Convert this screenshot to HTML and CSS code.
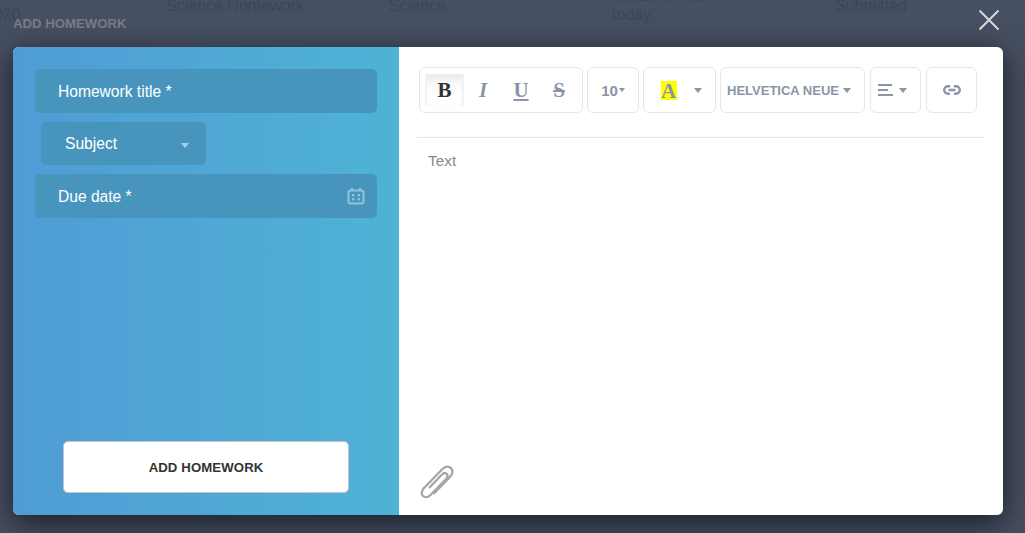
FILE: index.html
```html
<!DOCTYPE html>
<html lang="en">
<head>
    <meta charset="UTF-8">
    <title>Add homework</title>
    <link rel="stylesheet" href="styles.css">
</head>
<body>
    <div class="table-row">
        <span class="cell cell-date">02-<br>2020</span>
        <span class="cell cell-title">Science Homework</span>
        <span class="cell cell-subject">Science</span>
        <span class="cell cell-due">Deadline was<br>today</span>
        <span class="cell cell-status">Submitted</span>
    </div>

    <div class="overlay">
        <div class="overlay-head">
            <span class="overlay-title">ADD HOMEWORK</span>
            <svg class="close-icon" width="22" height="22" viewBox="0 0 22 22">
                <path d="M1.5 1.5 L20.5 20.5 M20.5 1.5 L1.5 20.5" />
            </svg>
        </div>

        <div class="modal">
            <div class="side">
                <div class="field">Homework title *</div>
                <div class="field field-select">
                    Subject
                    <span class="caret caret-light"></span>
                </div>
                <div class="field field-date">
                    Due date *
                    <svg class="date-icon" width="18" height="18" viewBox="0 0 18 18">
                        <rect x="1.5" y="3.5" width="15" height="13" rx="2" />
                        <path d="M5 1 V4 M13 1 V4" />
                        <rect class="dot" x="5" y="7" width="2.4" height="2.4" />
                        <rect class="dot" x="10.6" y="7" width="2.4" height="2.4" />
                        <rect class="dot" x="5" y="11" width="2.4" height="2.4" />
                        <rect class="dot" x="10.6" y="11" width="2.4" height="2.4" />
                    </svg>
                </div>
                <button class="submit">ADD HOMEWORK</button>
            </div>

            <div class="editor">
                <div class="toolbar">
                    <div class="tool-group group-style">
                        <span class="style-btn style-active">B</span>
                        <span class="style-btn style-italic">I</span>
                        <span class="style-btn style-under">U</span>
                        <span class="style-btn style-strike">S</span>
                    </div>
                    <div class="tool-group group-size">10<span class="caret caret-small"></span></div>
                    <div class="tool-group group-color">
                        <span class="color-a">A</span>
                        <span class="caret"></span>
                    </div>
                    <div class="tool-group group-font">HELVETICA NEUE<span class="caret"></span></div>
                    <div class="tool-group group-align">
                        <svg width="15" height="12" viewBox="0 0 15 12">
                            <path d="M0 1 H14 M0 6 H10 M0 11 H15" />
                        </svg>
                        <span class="caret"></span>
                    </div>
                    <div class="tool-group group-link">
                        <svg width="18" height="10" viewBox="0 0 18 10">
                            <path d="M7 1.2 H5 a3.8 3.8 0 0 0 0 7.6 H7 M11 1.2 H13 a3.8 3.8 0 0 1 0 7.6 H11 M5.5 5 H12.5" />
                        </svg>
                    </div>
                </div>
                <div class="text-area">Text</div>
                <svg class="clip-icon" width="36" height="34" viewBox="0 0 36 34">
                    <path d="M13.5 29 L30 12 C33.5 8 33 4.5 30.5 2.8 C28 1 25 1.5 22.5 4 L4 23 C1.5 26 1 28.5 2.8 30.8 C5 33 8 32.5 10.5 30 L26 14 C28 12 28 10 26.8 9 C25.5 7.8 23.5 8 22 9.5 L9 23" />
                </svg>
            </div>
        </div>
    </div>
</body>
</html>
```

FILE: styles.css
```css
* {
    margin: 0;
    padding: 0;
    box-sizing: border-box;
}

html, body {
    height: 100%;
    overflow: hidden;
}

body {
    position: relative;
    font-family: "Liberation Sans", Arial, sans-serif;
    background-color: #475062;
}

/* table behind the overlay */
.table-row {
    display: grid;
    grid-template-columns: 166px 223px 223px 223px 1fr;
    align-items: center;
    margin-top: -14px;
    font-size: 16px;
    line-height: 19px;
    color: #3d4657;
}

.cell-date {
    margin-left: -15px;
}

/* overlay */
.overlay {
    position: absolute;
    inset: 0;
    display: flex;
    flex-direction: column;
    padding: 0 22px 18px 13px;
}

.overlay-head {
    position: relative;
    height: 47px;
    padding-top: 14px;
}

.overlay-title {
    font-size: 13.2px;
    line-height: 15px;
    font-weight: 700;
    color: #777b84;
}

.close-icon {
    position: absolute;
    top: 9px;
    right: 3px;
}

.close-icon path {
    fill: none;
    stroke: #d5d7da;
    stroke-width: 2;
}

.modal {
    flex: 1;
    display: flex;
    border-radius: 6px;
    overflow: hidden;
    background: #fff;
}

.overlay::before {
    content: "";
    position: absolute;
    left: 13px;
    right: 22px;
    top: 47px;
    bottom: 18px;
    border-radius: 6px;
    box-shadow: 0 8px 30px 2px rgba(15, 17, 25, 0.75);
}

.overlay-head, .modal {
    z-index: 1;
}

/* left column */
.side {
    width: 386px;
    display: flex;
    flex-direction: column;
    align-items: flex-start;
    padding: 22px;
    background: linear-gradient(90deg, #4f9cd5, #4fb3d5);
}

.field {
    position: relative;
    width: 342px;
    height: 44px;
    padding-left: 23px;
    margin-bottom: 9px;
    border-radius: 5px;
    background: #4795bd;
    color: #fff;
    font-size: 15.6px;
    line-height: 46px;
}

.field-select {
    width: 165px;
    height: 43px;
    margin-left: 6px;
    padding-left: 24px;
    line-height: 44px;
}

.caret {
    display: inline-block;
    width: 0;
    height: 0;
    border-left: 4px solid transparent;
    border-right: 4px solid transparent;
    border-top: 5px solid #8a95a5;
}

.caret-light {
    position: absolute;
    right: 17px;
    top: 21px;
    border-top-color: #a9cfe2;
}

.date-icon {
    position: absolute;
    right: 12px;
    top: 13px;
}

.date-icon rect, .date-icon path {
    fill: none;
    stroke: #8fc2dc;
    stroke-width: 2;
}

.date-icon .dot {
    fill: #8fc2dc;
    stroke: none;
}

.submit {
    width: 286px;
    height: 52px;
    margin: auto 0 0 28px;
    border: 1px solid #c2c6ca;
    border-radius: 5px;
    background: #fff;
    color: #333;
    font-family: "Liberation Sans", Arial, sans-serif;
    font-size: 13.2px;
    font-weight: 700;
    letter-spacing: 0.1px;
}

/* editor */
.editor {
    flex: 1;
    display: flex;
    flex-direction: column;
    padding: 20px 18px 16px;
}

.toolbar {
    display: flex;
    gap: 4px;
    height: 71px;
    padding: 0 0 24px 2px;
    border-bottom: 1px solid #e2e6e8;
}

.tool-group {
    display: flex;
    align-items: center;
    justify-content: center;
    height: 46px;
    border: 1px solid #e3e7e9;
    border-radius: 6px;
    color: #8a95a5;
    font-size: 15px;
    font-weight: 700;
}

.group-style {
    width: 164px;
    justify-content: flex-start;
    padding-left: 5px;
}

.style-btn {
    width: 38px;
    height: 32px;
    font-family: "Liberation Serif", "Times New Roman", serif;
    font-size: 21px;
    line-height: 32px;
    text-align: center;
}

.style-active {
    width: 39px;
    background: linear-gradient(#e6e6e6, #fafafa 30%, #fff 70%);
    box-shadow: inset 2px 0 2px #f2f2f2, inset -2px 0 2px #f2f2f2;
    color: #333;
}

.style-italic {
    font-style: italic;
}

.style-under {
    text-decoration: underline;
}

.style-strike {
    text-decoration: line-through;
}

.group-size {
    width: 52px;
    gap: 1px;
}

.caret-small {
    border-left-width: 3.5px;
    border-right-width: 3.5px;
    border-top-width: 4px;
}

.group-color {
    width: 73px;
    gap: 17px;
    padding-left: 3px;
}

.color-a {
    width: 16px;
    height: 19px;
    background: #ff0;
    font-family: "Liberation Serif", "Times New Roman", serif;
    font-size: 21px;
    line-height: 20px;
    text-align: center;
}

.group-font {
    width: 145px;
    justify-content: flex-start;
    gap: 4px;
    padding-left: 6px;
    font-size: 13px;
}

.group-align {
    width: 51px;
    justify-content: flex-start;
    gap: 6px;
    padding-left: 7px;
    margin-left: 1px;
}

.group-align path {
    fill: none;
    stroke: #8a95a5;
    stroke-width: 2;
}

.group-link {
    width: 51px;
    margin-left: 1px;
}

.group-link path {
    fill: none;
    stroke: #8a95a5;
    stroke-width: 2.4;
}

.text-area {
    flex: 1;
    padding: 14px 0 0 11px;
    color: #8a8a8a;
    font-size: 15.4px;
    line-height: 18px;
}

.clip-icon {
    margin-left: 3px;
}

.clip-icon path {
    fill: none;
    stroke: #a6a6a6;
    stroke-width: 2.3;
}
```
